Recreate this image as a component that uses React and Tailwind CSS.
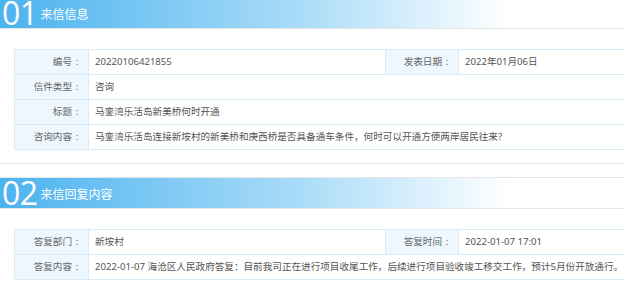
import React from "react";

const font = { fontFamily: '"Noto Sans", "Noto Sans CJK SC", sans-serif' };

const SectionBanner = ({ num, title }) => (
  <div className="h-[32px] border-y border-[#e6e6e6] bg-[linear-gradient(to_right,#4cb3ef,#a9dcf8_300px,#ffffff_510px)] flex items-center">
    <span className="ml-[2px] text-[32px] leading-none font-normal text-white font-['Open_Sans',sans-serif] tracking-[-0.5px]">
      {num}
    </span>
    <span className="ml-[3px] mt-[4px] text-[12px] text-white">{title}</span>
  </div>
);

// label cell, colon sits centred in a full-width slot
const Label = ({ children }) => (
  <td className="w-[74px] bg-[#eef7fe] border border-[#d8ebf8] text-right pr-[6px] text-[#666] whitespace-nowrap">
    {children}
    <span className="inline-block w-[10px] text-center">:</span>
  </td>
);

const Value = ({ children, span = 1 }) => (
  <td
    colSpan={span}
    className="border border-[#d8ebf8] pl-[6px] text-[#555] whitespace-nowrap"
  >
    {children}
  </td>
);

const InfoTable = ({ rows }) => (
  <table className="w-[742px] ml-[14px] border-collapse text-[9.6px] table-fixed">
    <colgroup>
      <col className="w-[74px]" />
      <col className="w-[297px]" />
      <col className="w-[73px]" />
      <col />
    </colgroup>
    <tbody>
      {rows.map((r, i) => (
        <tr key={i} className="h-[25px]">
          <Label>{r[0]}</Label>
          {r.length === 4 ? (
            <>
              <Value>{r[1]}</Value>
              <Label>{r[2]}</Label>
              <Value>{r[3]}</Value>
            </>
          ) : (
            <Value span={3}>{r[1]}</Value>
          )}
        </tr>
      ))}
    </tbody>
  </table>
);

const letter = [
  ["编号", "20220106421855", "发表日期", "2022年01月06日"],
  ["信件类型", "咨询"],
  ["标题", "马銮湾乐活岛新美桥何时开通"],
  [
    "咨询内容",
    "马銮湾乐活岛连接新垵村的新美桥和庚西桥是否具备通车条件，何时可以开通方便两岸居民往来?",
  ],
];

const reply = [
  ["答复部门", "新垵村", "答复时间", "2022-01-07 17:01"],
  [
    "答复内容",
    "2022-01-07 海沧区人民政府答复：目前我司正在进行项目收尾工作，后续进行项目验收竣工移交工作，预计5月份开放通行。",
  ],
];

export default function App() {
  return (
    <div className="w-[625px] h-[281px] overflow-hidden bg-white" style={font}>
      <div className="w-[770px] -mt-[3px]">
        <section className="border-b border-[#e6e6e6] pb-[13px]">
          <SectionBanner num="01" title="来信信息" />
          <div className="pt-[20px]">
            <InfoTable rows={letter} />
          </div>
        </section>
        <section className="mt-[13px] pb-[13px]">
          <SectionBanner num="02" title="来信回复内容" />
          <div className="pt-[20px]">
            <InfoTable rows={reply} />
          </div>
        </section>
      </div>
    </div>
  );
}
